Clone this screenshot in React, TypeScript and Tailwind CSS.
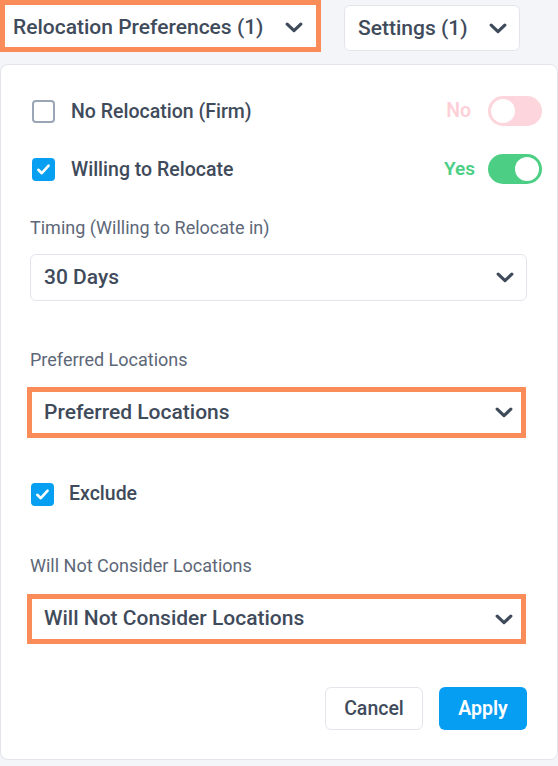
import React from "react";

const Chevron = ({ className = "" }: { className?: string }) => (
  <svg width="18" height="11" viewBox="0 0 18 11" className={className}>
    <polyline points="2.2,2.2 9,8.6 15.8,2.2" fill="none" stroke="#3f4b5b" strokeWidth="3.2" strokeLinecap="round" strokeLinejoin="round" />
  </svg>
);

const CheckBox = ({ checked }: { checked: boolean }) =>
  checked ? (
    <div className="w-[23px] h-[23px] rounded-[4px] bg-[#079ff2] flex items-center justify-center shrink-0">
      <svg width="15" height="13" viewBox="0 0 15 13">
        <polyline points="2.3,6.8 5.8,10.2 12.6,2.6" fill="none" stroke="white" strokeWidth="2.6" strokeLinecap="round" strokeLinejoin="round" />
      </svg>
    </div>
  ) : (
    <div className="w-[23px] h-[23px] rounded-[4px] border-2 border-[#9aa6b5] bg-white shrink-0" />
  );

const Toggle = ({ on }: { on: boolean }) =>
  on ? (
    <div className="w-[54px] h-[30px] rounded-full bg-[#4ccf85] flex items-center justify-end pr-[3px]">
      <div className="w-[24px] h-[24px] rounded-full bg-white" />
    </div>
  ) : (
    <div className="w-[54px] h-[30px] rounded-full bg-[#fdd5dc] flex items-center pl-[3px]">
      <div className="w-[24px] h-[24px] rounded-full bg-white" />
    </div>
  );

export default function App() {
  return (
    <div className="w-[558px] h-[766px] overflow-hidden bg-[#f3f5f8] font-['Roboto',sans-serif] text-[#3f4b5b]">
      <div className="flex items-start">
        <div className="h-[52px] w-[321px] border-[5px] border-[#f98c58] bg-white flex items-center justify-between pl-[8px] pr-[13px]">
          <span className="text-[21px] font-medium mt-[3px]">Relocation Preferences (1)</span>
          <Chevron className="mt-[2px]" />
        </div>
        <div className="mt-[5px] ml-[23px] h-[46px] w-[176px] border border-[#e2e6eb] rounded-[6px] bg-white flex items-center justify-between pl-[13px] pr-[12px]">
          <span className="text-[21px] font-medium mt-[1px]">Settings (1)</span>
          <Chevron />
        </div>
      </div>

      <div className="mt-[12px] h-[696px] border border-[#e2e6eb] rounded-[8px] bg-white pl-[29px] pr-[30px] pt-[31px]">
        <div className="flex items-center justify-between h-[30px] -mr-[15px] pl-[2px]">
          <div className="flex items-center gap-[16px]">
            <CheckBox checked={false} />
            <span className="text-[19.5px] font-medium mt-[1px]">No Relocation (Firm)</span>
          </div>
          <div className="flex items-center gap-[17px]">
            <span className="text-[19.5px] font-semibold text-[#fdd0d8]">No</span>
            <Toggle on={false} />
          </div>
        </div>

        <div className="flex items-center justify-between h-[30px] mt-[28px] -mr-[15px] pl-[2px]">
          <div className="flex items-center gap-[16px]">
            <CheckBox checked={true} />
            <span className="text-[19.5px] font-medium mt-[1px]">Willing to Relocate</span>
          </div>
          <div className="flex items-center gap-[13px]">
            <span className="text-[19px] font-semibold text-[#4ccf85]">Yes</span>
            <Toggle on={true} />
          </div>
        </div>

        <div className="mt-[32px] text-[18px] leading-[24px] text-[#5d6777]">Timing (Willing to Relocate in)</div>
        <div className="mt-[14px] h-[47px] border border-[#e2e6eb] rounded-[6px] flex items-center justify-between pl-[13px] pr-[12px]">
          <span className="text-[21px] font-medium mt-[1px]">30 Days</span>
          <Chevron />
        </div>

        <div className="mt-[47px] text-[18px] leading-[24px] text-[#5d6777]">Preferred Locations</div>
        <div className="mt-[15px] -ml-[3px] mr-[1px] h-[51px] border-[5px] border-[#f98c58] flex items-center justify-between pl-[12px] pr-[8px]">
          <span className="text-[21px] font-medium">Preferred Locations</span>
          <Chevron />
        </div>

        <div className="mt-[44px] flex items-center gap-[15px] h-[24px] pl-[1px]">
          <CheckBox checked={true} />
          <span className="text-[19.5px] font-medium">Exclude</span>
        </div>

        <div className="mt-[48px] text-[18px] leading-[24px] text-[#5d6777]">Will Not Consider Locations</div>
        <div className="mt-[16px] -ml-[3px] mr-[1px] h-[50px] border-[5px] border-[#f98c58] flex items-center justify-between pl-[12px] pr-[8px]">
          <span className="text-[21px] font-medium">Will Not Consider Locations</span>
          <Chevron />
        </div>

        <div className="mt-[43px] flex justify-end gap-[16px]">
          <button className="h-[43px] w-[98px] border border-[#e2e6eb] rounded-[6px] bg-white text-[19.5px] font-medium text-[#3f4b5b]">Cancel</button>
          <button className="h-[43px] w-[88px] rounded-[6px] bg-[#069ef2] text-[19.5px] font-semibold text-white">Apply</button>
        </div>
      </div>
    </div>
  );
}
